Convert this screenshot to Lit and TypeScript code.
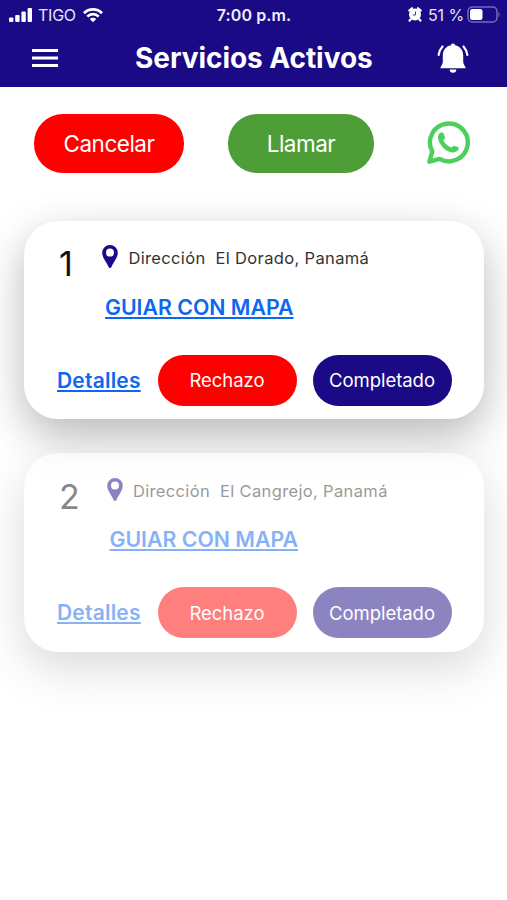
import { LitElement, html, css, svg } from "lit";
import { customElement, property } from "lit/decorators.js";
import { classMap } from "lit/directives/class-map.js";

@customElement("status-bar")
class StatusBar extends LitElement {
  static styles = css`
    :host { display: flex; height: 30px; align-items: center; color: #e6e3f6; font-size: 16px; line-height: 30px; }
    svg { display: block; flex: none; }
    .left, .right { display: flex; align-items: center; flex: 1; }
    .left { padding-left: 9px; }
    .left svg { margin-top: -1px; }
    .right { justify-content: flex-end; padding-right: 6px; }
    .right svg { margin-top: -2px; }
    .carrier { margin: 0 7px 0 5px; letter-spacing: -0.25px; }
    .time { color: #f0eefb; font-weight: 600; letter-spacing: 0.1px; margin-right: 2px; }
    .pct { margin: 0 3px 0 6px; letter-spacing: -0.1px; }
  `;
  render() {
    return html`
      <div class="left">
        <svg width="24" height="16" viewBox="0 0 24 16" fill="#fff">
          <rect x="0" y="10.5" width="4.4" height="4.5" rx="1" /><rect x="6.2" y="8" width="4.4" height="7" rx="1" />
          <rect x="12.4" y="4.5" width="4.4" height="10.5" rx="1" /><rect x="18.6" y="1" width="4.4" height="14" rx="1" />
        </svg>
        <span class="carrier">TIGO</span>
        <svg width="20" height="16" viewBox="0 0 20 16" fill="none" stroke="#fff" stroke-width="2.7">
          <path d="M1 6.2A12.7 12.7 0 0 1 19 6.2" /><path d="M4.3 9.6A8 8 0 0 1 15.7 9.6" />
          <path d="M10 15.3L6.8 12A4.5 4.5 0 0 1 13.2 12Z" fill="#fff" stroke="none" />
        </svg>
      </div>
      <span class="time">7:00 p.m.</span>
      <div class="right">
        <svg width="14" height="15" viewBox="0 0 14 15">
          <circle cx="7" cy="7.6" r="6" fill="#fff" /><path d="M1.3 3.6L4 1.3M12.7 3.6L10 1.3M2.6 12.5L1.6 13.6M11.4 12.5L12.4 13.6" stroke="#fff" stroke-width="2.3" stroke-linecap="round" />
          <path d="M7.5 4.5V8H4.8" fill="none" stroke="#1b0a85" stroke-width="0.8" />
        </svg>
        <span class="pct">51 %</span>
        <svg width="34" height="17" viewBox="0 0 34 17">
          <rect x="1" y="1" width="29" height="15" rx="4.3" fill="none" stroke="#7469b8" stroke-width="1.5" />
          <rect x="3" y="3" width="12.5" height="11" rx="2.2" fill="#fff" /><path d="M31.5 6V11C33 10.5 33 6.5 31.5 6Z" fill="#7469b8" />
        </svg>
      </div>
    `;
  }
}

@customElement("service-card")
class ServiceCard extends LitElement {
  @property({ type: Number }) number = 1;
  @property() place = "";
  @property({ type: Boolean }) inactive = false;

  static styles = css`
    :host { display: block; }
    .card { box-sizing: border-box; height: 198.5px; border-radius: 34px; background: #fff; padding: 20.4px 32.5px 13.5px 33px; display: flex; flex-direction: column; box-shadow: 0 16px 43px rgba(0, 0, 0, 0.28); }
    .inactive { opacity: 0.5; }
    .top { display: flex; flex: 1; }
    .num { width: 40px; font-size: 34px; line-height: 46px; color: #111; font-weight: 400; padding-left: 2px; box-sizing: border-box; }
    .info { padding-left: 5px; }
    .inactive .info { padding-left: 9.5px; }
    .addr { display: flex; height: 34px; align-items: center; font-size: 16.5px; color: #333; white-space: pre; }
    .addr svg { margin: -3px 10.4px 0 0; flex: none; }
    .addr span { letter-spacing: 0.35px; }
    .map { display: block; margin: 17.5px 0 0 3px; font-size: 21.3px; line-height: 28px; }
    .link { color: #0d68ef; font-weight: 600; text-decoration: underline; text-decoration-thickness: 2px; text-underline-offset: 2px; text-decoration-skip-ink: none; white-space: nowrap; }
    .actions { display: flex; align-items: center; }
    .det { width: 100.5px; font-size: 21px; letter-spacing: 0.2px; }
    .btn { width: 139px; height: 51px; border: 0; padding: 0; border-radius: 26px; font: 400 18.5px Inter, sans-serif; letter-spacing: -0.05px; color: #fff; background: #f00; }
    .btn + .btn { margin-left: 16px; background: #1b0a85; }
  `;
  render() {
    return html`
      <div class=${classMap({ card: true, inactive: this.inactive })}>
        <div class="top">
          <div class="num">${this.number}</div>
          <div class="info">
            <div class="addr">
              <svg width="16" height="23" viewBox="0 0 16 23"><path fill="#1b0a85" fill-rule="evenodd" d="M8 0A7.8 7.8 0 0 0 .2 7.8C.2 13 5 17.5 6.6 22.2Q8 23.6 9.4 22.2C11 17.5 15.8 13 15.8 7.8A7.8 7.8 0 0 0 8 0ZM8 3.6A4 4 0 1 1 8 11.6A4 4 0 1 1 8 3.6Z" /></svg>
              <span>Dirección  ${this.place}</span>
            </div>
            <a class="link map">GUIAR CON MAPA</a>
          </div>
        </div>
        <div class="actions">
          <a class="link det">Detalles</a>
          <button class="btn">Rechazo</button><button class="btn">Completado</button>
        </div>
      </div>
    `;
  }
}

const bell = svg`
  <path d="M16 1.5C14.6 1.5 14 2.3 14 3.2C8.5 4.2 5.8 8.5 5.8 13.5V20C5.8 22.5 3.3 24.5 3.3 26.3H28.7C28.7 24.5 26.2 22.5 26.2 20V13.5C26.2 8.5 23.5 4.2 18 3.2C18 2.3 17.4 1.5 16 1.5Z" fill="#fff" />
  <path d="M12.7 27.5H19.3A3.3 3.3 0 0 1 12.7 27.5Z" fill="#fff" />
  <path d="M5.5 4.5Q2.3 8 1.6 13M26.5 4.5Q29.7 8 30.4 13" fill="none" stroke="#fff" stroke-width="2.2" stroke-linecap="round" />`;

@customElement("app-root")
class AppRoot extends LitElement {
  static styles = css`
    :host { display: block; height: 900px; overflow: hidden; background: #fff; font-family: Inter, "Liberation Sans", sans-serif; }
    svg { display: block; flex: none; }
    header { height: 87px; background: #1b0a85; }
    .bar { display: flex; height: 55px; align-items: center; padding: 0 38px 0 32px; }
    h1 { margin: 0 auto 0 77px; font-size: 28px; line-height: 36px; font-weight: 700; color: #fff; white-space: nowrap; letter-spacing: -0.05px; }
    .tools { display: flex; align-items: center; height: 60px; padding: 26px 37px 0 34px; }
    .btn { border: 0; padding: 0; height: 59px; border-radius: 29px; font: 400 22.5px Inter, sans-serif; letter-spacing: -0.5px; color: #fff; }
    .cancel { width: 150px; background: #f00; }
    .call { width: 146px; margin-left: 44px; background: #4f9d36; }
    .wa { margin: -2px 0 0 auto; }
    main { padding: 47.7px 23px 0 24px; display: flex; flex-direction: column; gap: 34px; }
  `;
  render() {
    return html`
      <header>
        <status-bar></status-bar>
        <div class="bar">
          <svg width="26" height="20" viewBox="0 0 26 20"><path d="M0 2.5H26M0 10H26M0 17.5H26" stroke="#fff" stroke-width="2.8" /></svg>
          <h1>Servicios Activos</h1>
          <svg width="32" height="32" viewBox="0 0 32 32">${bell}</svg>
        </div>
      </header>
      <div class="tools">
        <button class="btn cancel">Cancelar</button>
        <button class="btn call">Llamar</button>
        <svg class="wa" width="43" height="43" viewBox="0 0 43 43">
          <path d="M2.4 40.7L5.3 30.5A18.9 18.9 0 1 1 12.6 37.9Z" fill="none" stroke="#4bd05c" stroke-width="4.4" stroke-linejoin="round" />
          <path d="M12.3 12.5C13.8 11.3 16 11.2 16.7 12.8L18 16.5C18.3 17.5 17 18.6 16.3 19.6C18.5 23.3 21 25.5 24.5 26.5C25.5 25.5 26.5 24.8 27.5 25L31 26C32.3 26.5 31.8 28.5 30.5 29.7C25.5 33.5 20 30.5 16.5 27C12.500 23 9 16.5 12.3 12.5Z" fill="#4bd05c" />
        </svg>
      </div>
      <main>
        <service-card .number=${1} place="El Dorado, Panamá"></service-card>
        <service-card .number=${2} place="El Cangrejo, Panamá" .inactive=${true}></service-card>
      </main>
    `;
  }
}
